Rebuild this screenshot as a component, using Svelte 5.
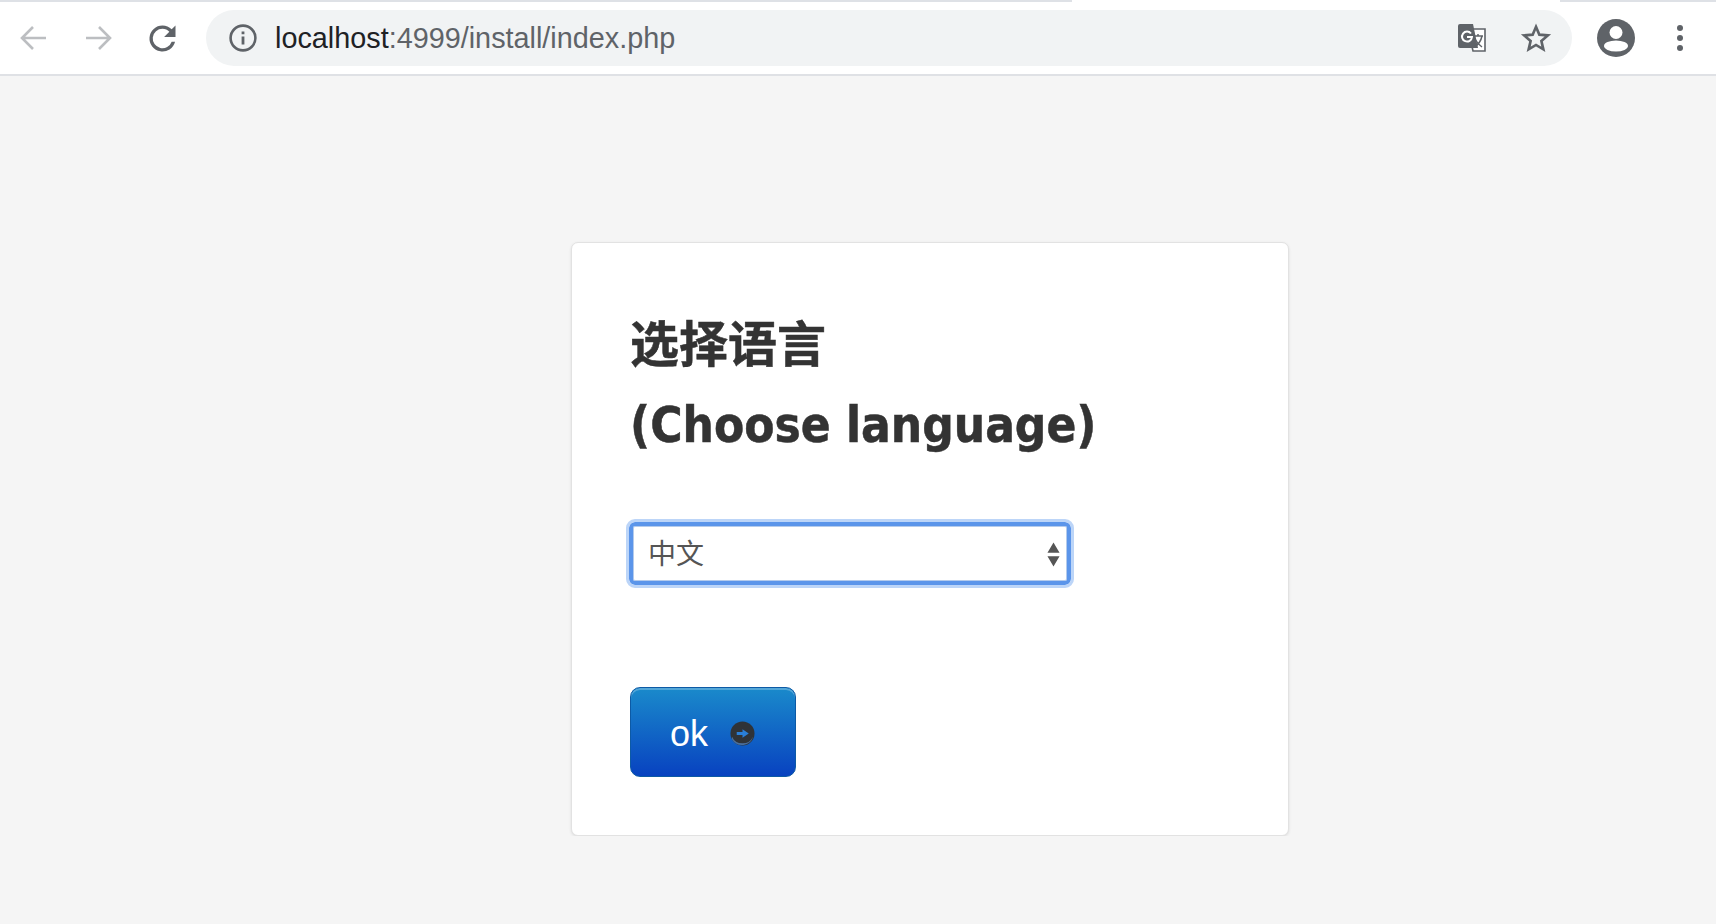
<script>
let lang = $state('zh');
</script>

<div class="tabstrip"><span class="tab-left"></span><span class="tab-right"></span></div>
<header class="toolbar">
  <button class="nav" aria-label="Back">
    <svg width="32" height="32" viewBox="0 0 32 32"><path d="M28 16H5M15 5 4 16l11 11" class="dim" /></svg>
  </button>
  <button class="nav" aria-label="Forward">
    <svg width="32" height="32" viewBox="0 0 32 32"><path d="M4 16h23M17 5l11 11-11 11" class="dim" /></svg>
  </button>
  <button class="nav" aria-label="Reload">
    <svg width="39" height="39" viewBox="0 0 24 24"><path fill="#5f6368" d="M17.65 6.35A7.96 7.96 0 0 0 12 4a8 8 0 1 0 7.73 10h-2.08A6 6 0 1 1 12 6c1.66 0 3.14.69 4.22 1.78L13 11h7V4l-2.35 2.35z" /></svg>
  </button>
  <div class="omnibox">
    <svg class="info" width="28" height="28" viewBox="0 0 28 28"><circle cx="14" cy="14" r="12.4" fill="none" stroke="#5f6368" stroke-width="2.6" /><path d="M14 12.5V20.5M14 7.5v2.8" stroke="#5f6368" stroke-width="2.8" /></svg>
    <div class="url"><span class="host">localhost</span>:4999/install/index.php</div>
    <svg class="translate" width="28" height="28" viewBox="0 0 28 28">
      <path fill="#fff" stroke="#5f6368" stroke-width="1.6" d="M10 5h17v22H15z" />
      <path fill="#5f6368" d="M2 0h13l5 24H2a2 2 0 0 1-2-2V2a2 2 0 0 1 2-2z" />
      <path fill="none" stroke="#fff" stroke-width="2" d="M13 9.5A5 5 0 1 0 14 13H9" />
      <path fill="none" stroke="#5f6368" stroke-width="1.5" d="M15 12h10M20 10v2M24 12c-1 5-4 9-8 11M17 15c2 4 4 6 7 8" />
    </svg>
    <svg class="star" width="32" height="32" viewBox="0 0 24 24"><path fill="none" stroke="#5f6368" stroke-width="2" stroke-linejoin="miter" d="M12 3.6l2.5 5.9 6.4.55-4.85 4.2 1.45 6.25L12 17.2l-5.5 3.3 1.45-6.25-4.85-4.2 6.4-.55z" /></svg>
  </div>
  <svg class="avatar" width="38" height="38" viewBox="0 0 38 38">
    <circle cx="19" cy="19" r="19" fill="#5f6368" />
    <circle cx="19" cy="13.5" r="6.5" fill="#fff" />
    <ellipse cx="19" cy="27" rx="12" ry="5.5" fill="#fff" />
  </svg>
  <div class="dots"><i></i><i></i><i></i></div>
</header>

<main class="page">
  <section class="card">
    <h1>选择语言<br />(Choose language)</h1>
    <div class="select-wrap">
      <select bind:value={lang}>
        <option value="zh">中文</option>
        <option value="en">English</option>
      </select>
      <svg class="arrows" width="13" height="25" viewBox="0 0 14 26"><path fill="#555" d="M7 0l6.5 11H.5zM7 26 .5 15h13z" /></svg>
    </div>
    <button class="ok">
      ok
      <svg width="25" height="25" viewBox="0 0 26 26">
        <circle cx="13" cy="13" r="12.5" fill="#2f3338" />
        <path d="M2 16a12 12 0 0 0 22 0 12 12 0 0 1-22 3z" fill="#4a6f9c" />
        <path fill="#2a7fd8" d="M7 11.5h6V8.5l6.5 4.5-6.5 4.5v-3H7z" />
      </svg>
    </button>
  </section>
</main>

<style>
:global(body) {
  background: #f5f5f5;
}
.tabstrip {
  height: 2px;
  background: #fff;
  display: flex;
  justify-content: space-between;
}
.tab-left {
  width: 1072px;
  background: #dee1e6;
}
.tab-right {
  width: 156px;
  background: #dee1e6;
}
.toolbar {
  height: 74px;
  box-sizing: border-box;
  background: #fff;
  border-bottom: 2px solid #dfe1e5;
  display: flex;
  align-items: center;
  padding: 0 0 0 2px;
}
.nav {
  width: 64px;
  height: 56px;
  padding: 0;
  border: 0;
  background: none;
  display: flex;
  align-items: center;
  justify-content: center;
  flex: none;
}
.dim {
  fill: none;
  stroke: #bcbec1;
  stroke-width: 2.6;
}
.omnibox {
  width: 1366px;
  height: 56px;
  margin-left: 12px;
  border-radius: 28px;
  background: #f1f3f4;
  display: flex;
  align-items: center;
  box-sizing: border-box;
  padding: 0 20px 0 23px;
  flex: none;
}
.url {
  flex: 1;
  margin-left: 18px;
  font: 28.8px "Liberation Sans", Arial, sans-serif;
  color: #5f6368;
}
.host {
  color: #202124;
}
.star {
  margin-left: 34px;
}
.avatar {
  margin-left: 25px;
  flex: none;
}
.dots {
  margin-left: 42px;
  display: flex;
  flex-direction: column;
  gap: 4px;
}
.dots i {
  width: 6px;
  height: 6px;
  border-radius: 50%;
  background: #5f6368;
}
.page {
  padding: 166px 0 0 571px;
}
.card {
  width: 718px;
  height: 594px;
  box-sizing: border-box;
  background: #fff;
  border: 1px solid #e2e2e2;
  border-radius: 7px;
  box-shadow: 0 1px 3px rgba(0, 0, 0, 0.1);
  padding: 63px 58px 0;
}
h1 {
  margin: 0;
  font: bold 49px/80px "DejaVu Sans", "Noto Sans CJK SC", sans-serif;
  font-stretch: condensed;
  -webkit-text-stroke: 0.5px #333;
  color: #333;
}
.select-wrap {
  position: relative;
  width: 442px;
  margin: 56px 0 0 -1px;
}
select {
  display: block;
  width: 100%;
  height: 63px;
  box-sizing: border-box;
  appearance: none;
  background: #fff;
  border: 4px solid #5b95ea;
  border-radius: 6px;
  outline: 3px solid #bcd5f8;
  outline-offset: 0;
  box-shadow: inset 0 0 0 1px #b4cbec;
  padding: 0 15px 4px;
  font: 28px "Noto Sans CJK SC", sans-serif;
  color: #555;
}
.arrows {
  position: absolute;
  right: 11px;
  top: 20px;
}
.ok {
  display: flex;
  align-items: center;
  gap: 22px;
  width: 166px;
  height: 90px;
  margin-top: 102px;
  padding: 3px 0 0 39px;
  box-sizing: border-box;
  border: 1px solid #0d5aa5;
  border-radius: 10px;
  background: linear-gradient(#1a8acb, #0842c0);
  box-shadow: inset 0 2px 0 rgba(255, 255, 255, 0.25);
  color: #fff;
  font: 36px "Liberation Sans", Arial, sans-serif;
}
</style>
